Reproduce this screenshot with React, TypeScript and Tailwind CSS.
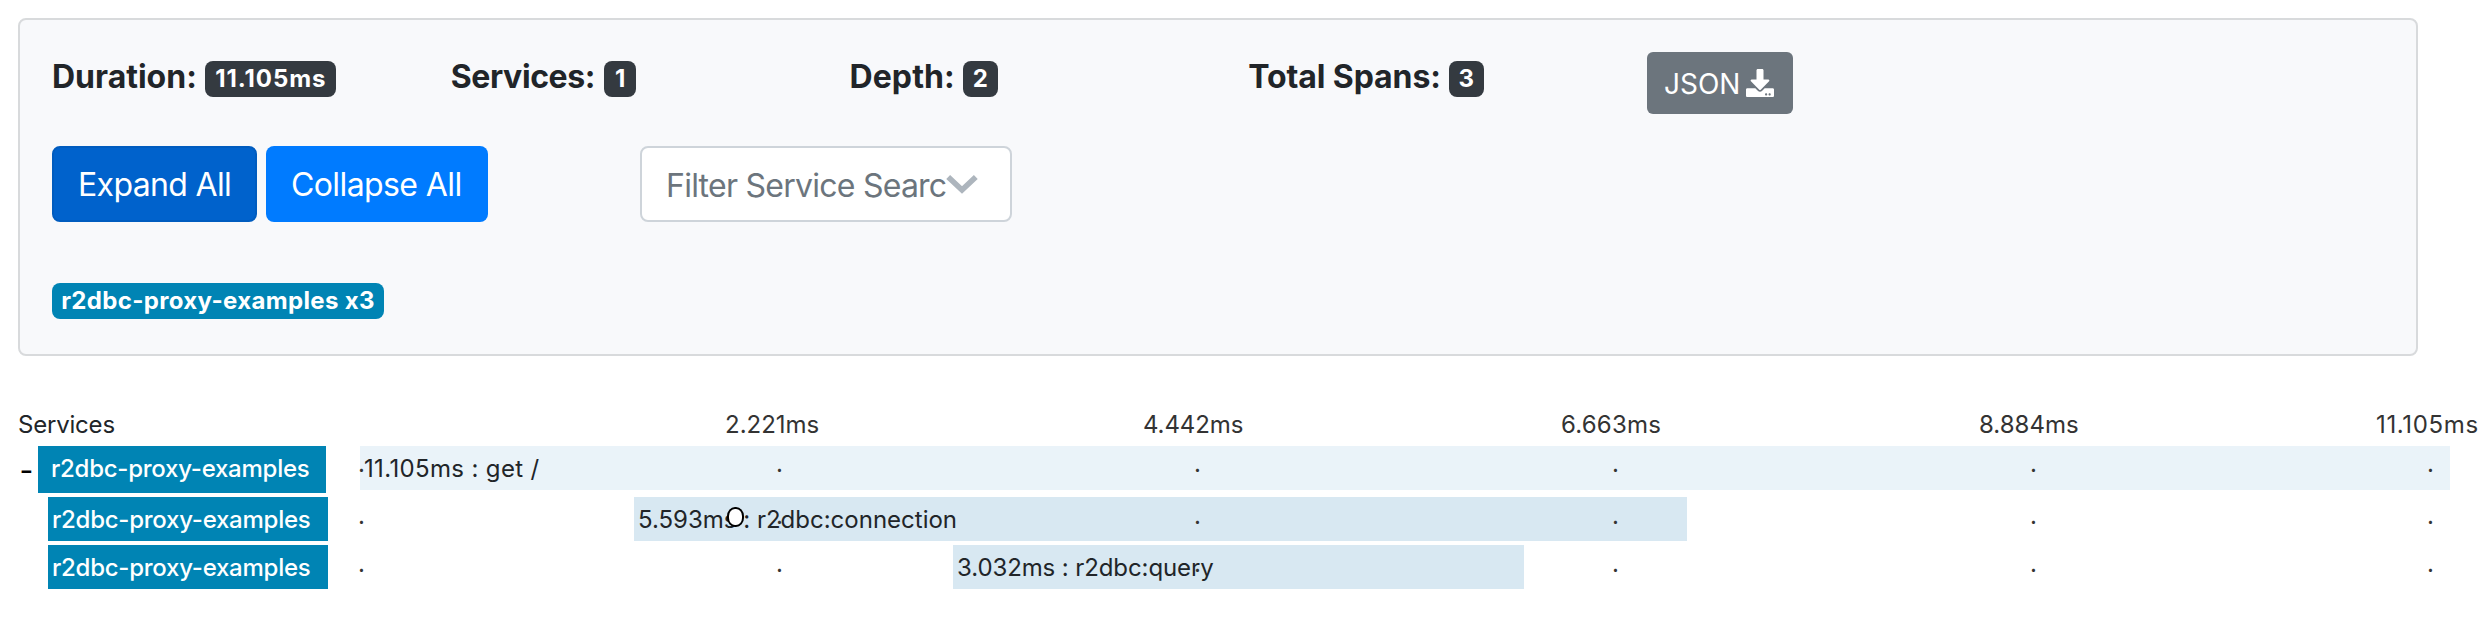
import { FaDownload } from "react-icons/fa";

const stats = [
  { label: "Duration:", value: "11.105ms", labelClass: "tracking-normal", badge: "ml-2 w-[131px] pl-px tracking-[0.9px]" },
  { label: "Services:", value: "1", labelClass: "tracking-[-0.4px]", badge: "ml-[9px] w-8" },
  { label: "Depth:", value: "2", labelClass: "tracking-[0.1px]", badge: "ml-2 w-[35px]" },
  { label: "Total Spans:", value: "3", labelClass: "tracking-[-0.1px]", badge: "ml-2 w-[35px]" },
];

const ticks = [
  { text: "2.221ms", cell: "w-[418px] tracking-normal" },
  { text: "4.442ms", cell: "w-[418px] tracking-[-0.1px]" },
  { text: "6.663ms", cell: "w-[418px] tracking-[0.2px]" },
  { text: "8.884ms", cell: "w-[397px] tracking-normal" },
  { text: "11.105ms", cell: "tracking-[0.65px]" },
];

const spans = [
  {
    text: "11.105ms : get /",
    row: "h-[51px]",
    name: "ml-1.5 w-[288px] h-[47px] pl-[13px] leading-[37px]",
    gap: "w-[34px]",
    bar: "w-[2090px] pl-1 bg-[#eaf3f9] leading-[37px] tracking-[0.35px]",
    dots: "pt-0",
    parent: true,
  },
  {
    text: "5.593ms : r2dbc:connection",
    row: "h-12",
    name: "ml-4 w-[280px] h-11 pl-1 leading-[38px]",
    gap: "w-8",
    bar: "ml-[274px] w-[1053px] pl-1 bg-[#d8e8f2] leading-[38px]",
    dots: "pt-px",
    cursor: true,
  },
  {
    text: "3.032ms : r2dbc:query",
    row: "h-12",
    name: "ml-4 w-[280px] h-11 pl-1 leading-[38px]",
    gap: "w-8",
    bar: "ml-[593px] w-[571px] pl-1 bg-[#d8e8f2] leading-[38px] tracking-[-0.1px]",
    dots: "pt-px",
  },
];

const dots = ["w-[418px]", "w-[418px]", "w-[418px]", "w-[418px]", "w-[397px]", "w-2"];

function Summary() {
  return (
    <section className="h-[338px] w-[2400px] rounded-[8px] border-2 border-[#d8dadc] bg-[#f8f9fb] p-8">
      <div className="flex h-[62px]">
        {stats.map((s) => (
          <div key={s.label} className="flex w-[398.75px] items-start">
            <span className={"pt-px text-[32px] leading-12 font-bold " + s.labelClass}>{s.label}</span>
            <span
              className={
                "mt-[9px] flex h-9 items-center justify-center rounded-[8px] bg-[#343a40] text-2xl leading-6 font-bold text-white " +
                s.badge
              }
            >
              {s.value}
            </span>
          </div>
        ))}
        <button className="flex h-[62px] w-[146px] items-center gap-[6px] rounded-[6px] bg-[#6c757d] pl-[17px] text-[28px] text-white">
          <span className="pt-0.5 leading-[42px]">JSON</span>
          <FaDownload className="size-7" />
        </button>
      </div>

      <div className="mt-8 flex h-[76px]">
        <button className="w-[205px] rounded-[8px] border-2 border-[#005cbf] bg-[#0062cc] pt-0.5 pl-6 text-left text-[32px] leading-12 tracking-[-0.65px] text-white">
          Expand All
        </button>
        <button className="ml-[9px] w-[222px] rounded-[8px] bg-[#007bff] pt-0.5 pl-[25px] text-left text-[32px] leading-12 tracking-[-0.6px] text-white">
          Collapse All
        </button>
        <div className="ml-[152px] flex w-[372px] items-center rounded-[8px] border-2 border-[#ced4da] bg-white pl-6 text-[32px] text-[#6c757d]">
          <span className="w-[280px] overflow-hidden pt-1 leading-12 tracking-[-0.75px] whitespace-nowrap">
            Filter Service Searc
          </span>
          <svg className="h-5 w-8" viewBox="0 0 32 20" fill="none" stroke="#adb5bd" strokeWidth="5.6">
            <path d="M2.2 3L16 16L29.8 3" />
          </svg>
        </div>
      </div>

      <div className="mt-[61px] flex">
        <span className="flex h-9 w-[332px] items-center justify-center rounded-[8px] bg-[#0084b4] text-2xl leading-6 font-bold tracking-[0.35px] text-white">
          r2dbc-proxy-examples x3
        </span>
      </div>
    </section>
  );
}

function Timeline() {
  return (
    <section className="mt-[50px] text-2xl">
      <div className="flex h-10 leading-[38px]">
        <span className="w-[707px] tracking-[-0.2px]">Services</span>
        {ticks.map((t) => (
          <span key={t.text} className={"shrink-0 text-[#333] " + t.cell}>
            {t.text}
          </span>
        ))}
      </div>
      {spans.map((s) => (
        <div key={s.text} className={"flex items-start " + s.row}>
          <span className="flex h-11 w-3.5 shrink-0 justify-center pl-[3px] text-[30px] leading-[49px] text-black">
            {s.parent ? "-" : ""}
          </span>
          <div className={"shrink-0 bg-[#0084b4] pt-1 font-medium tracking-[-0.25px] text-white " + s.name}>
            r2dbc-proxy-examples
          </div>
          <div className={"shrink-0 " + s.gap} />
          <div className="relative flex w-[2090px] shrink-0">
            <div className={"h-11 pt-1 whitespace-nowrap " + s.bar}>{s.text}</div>
            <div className={"absolute inset-0 flex leading-9 text-[#333] " + s.dots}>
              {dots.map((d, i) => (
                <span key={i} className={"shrink-0 first:-ml-[2px] " + d}>
                  .
                </span>
              ))}
            </div>
            {s.cursor && (
              <div className="absolute top-[10px] left-[367px] h-5 w-[17px] rounded-[8px/9px] border-2 border-black bg-white" />
            )}
          </div>
        </div>
      ))}
    </section>
  );
}

export default function App() {
  return (
    <main className="h-[620px] w-[2492px] overflow-hidden bg-white pt-[18px] pl-[18px] font-['Inter',sans-serif] text-[#212529]">
      <Summary />
      <Timeline />
    </main>
  );
}
